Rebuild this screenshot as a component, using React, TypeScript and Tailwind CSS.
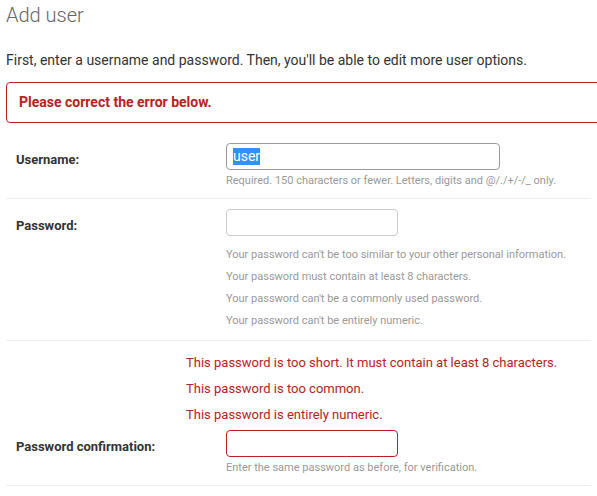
import React from "react";

const passwordHelp = [
    "Your password can't be too similar to your other personal information.",
    "Your password must contain at least 8 characters.",
    "Your password can't be a commonly used password.",
    "Your password can't be entirely numeric.",
];

const confirmErrors = [
    "This password is too short. It must contain at least 8 characters.",
    "This password is too common.",
    "This password is entirely numeric.",
];

export default function App() {
    return (
        <div className="min-h-[496px] overflow-hidden bg-white px-[6px] text-[#333] font-['Roboto','Liberation_Sans',sans-serif]">

            {/* Title */}
            <h1 className="pt-[3px] text-[20px] leading-6 font-light text-[#666]">Add user</h1>

            {/* Intro */}
            <p className="mt-[23px] text-[14px] leading-5">
                First, enter a username and password. Then, you'll be able to edit more user options.
            </p>

            {/* Error note */}
            <p className="mt-[12px] -mr-[40px] border border-[#ba2121] rounded-[4px] px-[12px] py-[10px] text-[14px] leading-[19px] font-bold text-[#ba2121]">
                Please correct the error below.
            </p>

            {/* Username */}
            <div className="mt-[10px] flex px-[10px] pt-[10px] pb-[10px] border-b border-[#eee]">
                <label className="w-[210px] shrink-0 pt-[9px] text-[13px] leading-4 font-bold">Username:</label>
                <div>
                    <div className="w-[274px] h-[27px] border border-[#999] rounded-[4px] px-[6px] flex items-center">
                        <span className="bg-[#3390ff] text-white text-[14px] leading-[17px]">user</span>
                    </div>
                    <p className="mt-[4px] text-[11px] leading-[14px] text-[#999]">
                        Required. 150 characters or fewer. Letters, digits and @/./+/-/_ only.
                    </p>
                </div>
            </div>

            {/* Password */}
            <div className="flex px-[10px] pt-[10px] pb-[8px] border-b border-[#eee]">
                <label className="w-[210px] shrink-0 pt-[9px] text-[13px] leading-4 font-bold">Password:</label>
                <div>
                    <div className="w-[172px] h-[27px] border border-[#ccc] rounded-[4px]" />
                    <ul className="mt-[8px] text-[11px] leading-[22px] text-[#999]">
                        {passwordHelp.map((t) => (
                            <li key={t}>{t}</li>
                        ))}
                    </ul>
                </div>
            </div>

            {/* Password confirmation */}
            <div className="px-[10px] pt-[14px] pb-[10px] border-b border-[#eee]">
                <ul className="ml-[170px] text-[13px] leading-4 text-[#ba2121] flex flex-col gap-[10px]">
                    {confirmErrors.map((t) => (
                        <li key={t}>{t}</li>
                    ))}
                </ul>
                <div className="mt-[7px] flex">
                    <label className="w-[210px] shrink-0 pt-[9px] text-[13px] leading-4 font-bold">Password confirmation:</label>
                    <div>
                        <div className="w-[172px] h-[27px] border border-[#ba2121] rounded-[4px]" />
                        <p className="mt-[4px] text-[11px] leading-[14px] text-[#999]">
                            Enter the same password as before, for verification.
                        </p>
                    </div>
                </div>
            </div>
        </div>
    );
}
